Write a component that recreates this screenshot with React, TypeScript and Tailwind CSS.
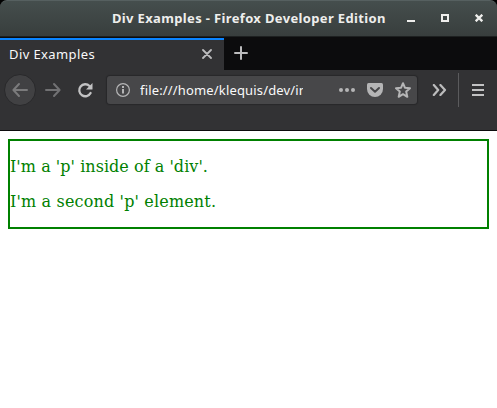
import React from 'react';

function WindowTitleBar() {
  return (
    <div className="bg-black">
      <header className="flex h-9 items-center rounded-t-[7px] border-t border-[#566060] bg-linear-to-b from-[#454e4d] to-[#383e3d] pr-[14px]">
        <h1 className="ml-[112px] whitespace-nowrap pb-px text-[13px] leading-5 font-bold tracking-[0.35px] text-[#eeeeec]">
          Div Examples - Firefox Developer Edition
        </h1>
        <div className="mb-[2px] ml-auto flex gap-[26px] text-[#eeeeec]">
          <svg width="8" height="8" fill="currentColor"><path d="M0 6h8v2H0z" /></svg>
          <svg width="8" height="8" fill="none" stroke="currentColor" strokeWidth="2"><path d="M1 1h6v6H1z" /></svg>
          <svg width="8" height="8" fill="none" stroke="currentColor" strokeWidth="2.3"><path d="m.7.7 6.6 6.6m0-6.6L.7 7.3" /></svg>
        </div>
      </header>
    </div>
  );
}

function TabStrip() {
  return (
    <div className="flex h-[34px] border-t border-[#1d2020] bg-[#0c0c0d] pt-px">
      <div className="flex h-8 w-56 items-center border-t-2 border-[#0a84ff] bg-[#323234] pl-[9px] text-[#f9f9fa]">
        <span className="pb-[2px] text-[13px] leading-5 tracking-[0.4px]">Div Examples</span>
        <svg className="mb-[2px] ml-auto mr-[12px] text-[#bcbcbd]" width="10" height="10" fill="none" stroke="currentColor" strokeWidth="1.8" strokeLinecap="round"><path d="m1 1 8 8m0-8L1 9" /></svg>
      </div>
      <svg className="ml-[10px] mt-2 text-[#bcbcbd]" width="14" height="14" fill="none" stroke="currentColor" strokeWidth="2" strokeLinecap="round"><path d="M1 7h12M7 1v12" /></svg>
    </div>
  );
}

function AddressBar() {
  return (
    <div className="ml-[14px] flex h-7 w-[310px] items-center rounded-[3px] bg-[#474749] pl-[9px] text-[#b5b5b6] shadow-[0_0_1px_1px_rgba(20,20,22,0.35)]">
      <svg width="14" height="14" viewBox="0 0 14 14" fill="none" stroke="currentColor">
        <circle cx="7" cy="7" r="6.4" strokeWidth="1.2" />
        <path d="M7 6v4.5M7 3v2" strokeWidth="2" />
      </svg>
      <div className="ml-[10px] w-[163px] overflow-hidden whitespace-nowrap text-[13px] leading-5 tracking-[0.16px] text-[#f9f9fa]">
        file:///home/klequis/dev/in
      </div>
      <svg className="ml-[36px]" width="16" height="4" fill="currentColor"><circle cx="2" cy="2" r="2" /><circle cx="8" cy="2" r="2" /><circle cx="14" cy="2" r="2" /></svg>
      <svg className="ml-[12px]" width="16" height="16" viewBox="0 0 16 16">
        <path d="M1.5 1h13Q16 1 16 2.5V7A8 8 0 0 1 0 7V2.5Q0 1 1.5 1z" fill="currentColor" />
        <path d="m4 6 4 3.8L12 6" fill="none" stroke="#474749" strokeWidth="2" strokeLinecap="round" strokeLinejoin="round" />
      </svg>
      <svg className="ml-3" width="16" height="16" viewBox="0 0 16 16" fill="none" stroke="currentColor" strokeWidth="2" strokeLinejoin="round">
        <path d="m8 1.2 1.9 4.5 5.1.5-3.8 3.4 1.1 5.2L8 12.2l-4.3 2.6 1.1-5.2L1 6.2l5.1-.5z" />
      </svg>
    </div>
  );
}

function NavigationBar() {
  return (
    <nav className="flex h-[61px] items-start border-b border-[#0c0c0d] bg-[#323234] pt-1">
      <div className="flex h-8 items-center">
        <div className="ml-1 flex size-8 items-center justify-center rounded-full border border-[#29292b] bg-[#414143] text-[#7b7b7c]">
          <svg width="16" height="16" viewBox="0 0 16 16" fill="none" stroke="currentColor" strokeWidth="2" strokeLinecap="round" strokeLinejoin="round"><path d="M15 8H1.5M7 2 1.4 8 7 14" /></svg>
        </div>
        <svg className="ml-[9px] text-[#717173]" width="16" height="16" viewBox="0 0 16 16" fill="none" stroke="currentColor" strokeWidth="2" strokeLinecap="round" strokeLinejoin="round"><path d="M1 8h13.5M9 2l5.6 6L9 14" /></svg>
        <svg className="ml-4 text-[#c2c2c3]" width="16" height="16" viewBox="0 0 16 16">
          <path d="M13.6 11A6 6 0 1 1 12.5 4" fill="none" stroke="currentColor" strokeWidth="2.3" strokeLinecap="round" />
          <path d="M15.5 1v6q0 .5-.5.5H9z" fill="currentColor" />
        </svg>
        <AddressBar />
        <svg className="ml-[15px] text-[#bcbcbd]" width="15" height="12" viewBox="0 0 15 12" fill="none" stroke="currentColor" strokeWidth="2.2" strokeLinecap="round" strokeLinejoin="round"><path d="m1.8 1 4.4 5-4.4 5M8.4 1l4.6 5-4.6 5" /></svg>
        <div className="ml-[11px] h-[34px] w-px bg-[#5b5b5d]" />
        <svg className="ml-[13px] text-[#c2c2c3]" width="12" height="12" fill="currentColor"><path d="M0 0h12v2H0zM0 5h12v2H0zM0 10h12v2H0z" /></svg>
      </div>
    </nav>
  );
}

export default function App() {
  return (
    <div className="h-[408px] w-[497px] overflow-hidden bg-white font-['Noto_Sans','Open_Sans',sans-serif]">
      <WindowTitleBar />
      <TabStrip />
      <NavigationBar />
      <main className="p-2">
        <div className="h-[90px] border-2 border-[#008000] py-4 font-['DejaVu_Serif',serif] text-base leading-[19px] text-[#008000]">
          <p className="tracking-[0.04px]">I'm a 'p' inside of a 'div'.</p>
          <p className="mt-4 tracking-[0.16px]">I'm a second 'p' element.</p>
        </div>
      </main>
    </div>
  );
}
